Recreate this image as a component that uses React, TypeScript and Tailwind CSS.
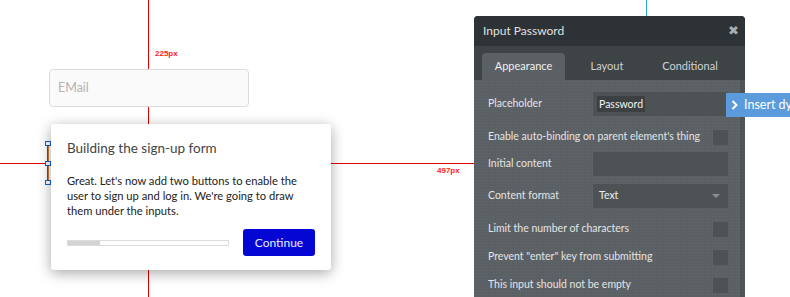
import React from "react";

type Kind = "check" | "input" | "select" | "placeholder";

const rows: { label: string; kind: Kind; mt: string }[] = [
  { label: "Placeholder", kind: "placeholder", mt: "mt-0" },
  { label: "Enable auto-binding on parent element's thing", kind: "check", mt: "mt-[14px]" },
  { label: "Initial content", kind: "input", mt: "mt-[8px]" },
  { label: "Content format", kind: "select", mt: "mt-[8px]" },
  { label: "Limit the number of characters", kind: "check", mt: "mt-[14px]" },
  { label: "Prevent \"enter\" key from submitting", kind: "check", mt: "mt-[14px]" },
  { label: "This input should not be empty", kind: "check", mt: "mt-[14px]" },
];

function Row({ label, kind, mt }: { label: string; kind: Kind; mt: string }) {
  if (kind === "check") {
    return (
      <div className={`${mt} flex items-center justify-between h-[14px] pl-[14px] pr-[12px] whitespace-nowrap`}>
        <span>{label}</span>
        <div className="w-[15px] h-[15px] bg-[#4d5255]" />
      </div>
    );
  }
  return (
    <div className={`${mt} flex items-center justify-between h-[24px] pl-[14px] pr-[12px]`}>
      <span>{label}</span>
      <div className="w-[135px] h-[24px] bg-[#4d5255] flex items-center px-[4px] text-[#f0f0f0]">
        {kind === "placeholder" && <span className="bg-[#3c4043] px-[2px] leading-[16px]">Password</span>}
        {kind === "select" && (
          <div className="flex w-full items-center justify-between pl-[2px] pr-[4px]">
            <span>Text</span>
            <span className="w-0 h-0 border-l-[4px] border-r-[4px] border-t-[4px] border-l-transparent border-r-transparent border-t-[#8a8f92]" />
          </div>
        )}
      </div>
    </div>
  );
}

export default function App() {
  return (
    <div className="relative w-[790px] h-[297px] overflow-hidden bg-white" style={{ fontFamily: "Lato, 'Open Sans', sans-serif" }}>
      {/* guides */}
      <div className="absolute left-[148px] top-0 w-px h-[297px] bg-[#e00000]" />
      <div className="absolute left-0 top-[163px] w-[474px] h-px bg-[#e00000]" />
      <div className="absolute left-[646px] top-0 w-px h-[16px] bg-[#2aa7d6]" />
      <div className="absolute left-[155px] top-[48px] text-[8px] font-bold text-[#ff1a1a]" style={{ fontFamily: "'Liberation Sans', sans-serif" }}>225px</div>
      <div className="absolute left-[437px] top-[165px] text-[8px] font-bold text-[#ff1a1a]" style={{ fontFamily: "'Liberation Sans', sans-serif" }}>497px</div>

      {/* email input on canvas */}
      <div className="absolute left-[49px] top-[69px] w-[200px] h-[38px] rounded-[4px] border border-[#dcdcdc] bg-[#fafafa] flex items-center pl-[8px] text-[12.5px] text-[#b3b3b3]">
        EMail
      </div>

      {/* selection handles */}
      <div className="absolute left-[47px] top-[142px] w-px h-[41px] bg-[#1a5fd1]" />
      <div className="absolute left-[48px] top-[143px] w-px h-[40px] bg-[#c87a3a]" />
      <div className="absolute left-[45px] top-[141px] w-[6px] h-[5px] border border-[#1a5fd1] bg-white" />
      <div className="absolute left-[45px] top-[161px] w-[6px] h-[5px] border border-[#1a5fd1] bg-white" />
      <div className="absolute left-[45px] top-[180px] w-[6px] h-[5px] border border-[#1a5fd1] bg-white" />

      {/* tutorial modal */}
      <div className="absolute left-[51px] top-[124px] w-[280px] h-[146px] bg-white rounded-[3px] shadow-[0_3px_14px_rgba(0,0,0,0.35)] px-[16px] pt-[15px]">
        <div className="text-[13.5px] leading-[18px] text-[#444]">Building the sign-up form</div>
        <div className="mt-[16px] pr-[6px] text-[11.2px] leading-[15px] text-[#222]">
          Great. Let's now add two buttons to enable the user to sign up and log in. We're going to draw them under the inputs.
        </div>
        <div className="mt-[11px] flex items-center justify-between">
          <div className="w-[162px] h-[6px] border border-[#dcdcdc] bg-white">
            <div className="w-[32px] h-full bg-[#d3d3d3]" />
          </div>
          <button className="w-[72px] h-[27px] rounded-[3px] bg-[#0407d4] text-[#e8e8ff] text-[12px]">
            Continue
          </button>
        </div>
      </div>

      {/* property panel */}
      <div className="absolute left-[474px] top-[16px] w-[271px] h-[290px] rounded-t-[4px] overflow-hidden bg-[#5b6064] flex flex-col text-[10.5px] text-[#e4e4e4]">
        <div className="h-[30px] shrink-0 bg-[#2c3235] flex items-center justify-between pl-[9px] pr-[6px]">
          <span className="text-[12px] text-[#e0e0e0]">Input Password</span>
          <span className="text-[13px] font-bold text-[#a9adb0]" style={{ fontFamily: "'DejaVu Sans', sans-serif" }}>✖</span>
        </div>
        <div className="h-[34px] shrink-0 bg-[#3e4346] flex items-end pl-[8px] text-[11px]">
          <div className="w-[83px] h-[27px] rounded-t-[4px] bg-[#5b6064] flex items-center justify-center text-[#f0f0f0]">Appearance</div>
          <div className="w-[84px] h-[27px] flex items-center justify-center text-[#cfd2d4]">Layout</div>
          <div className="w-[82px] h-[27px] flex items-center justify-center text-[#cfd2d4]">Conditional</div>
        </div>
        <div className="flex flex-1">
          <div className="flex-1 pt-[12px] flex flex-col bg-[radial-gradient(rgba(255,255,255,0.05)_1px,transparent_1px)] bg-[size:3px_3px]">
            {rows.map((r) => (
              <Row key={r.label} label={r.label} kind={r.kind} mt={r.mt} />
            ))}
          </div>
          <div className="w-[5px] bg-[#4f5457]" />
        </div>
      </div>

      {/* insert dynamic data tab */}
      <div className="absolute left-[726px] top-[93px] w-[110px] h-[24px] bg-[#5b9bdc] flex items-center pl-[5px] text-[12.5px] text-white whitespace-nowrap">
        <svg width="7" height="10" viewBox="0 0 7 10" className="mr-[6px] shrink-0">
          <path d="M1.5 1 L5.5 5 L1.5 9" fill="none" stroke="white" strokeWidth="2" />
        </svg>
        <span>Insert dynamic data</span>
      </div>
    </div>
  );
}
